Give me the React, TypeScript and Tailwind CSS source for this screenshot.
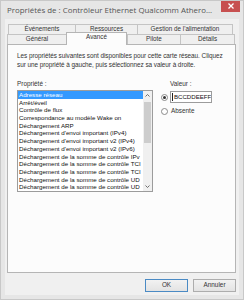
import React from "react";

const items = [
  "Adresse réseau",
  "Arrêt/éveil",
  "Contrôle de flux",
  "Correspondance au modèle Wake on",
  "Déchargement ARP",
  "Déchargement d'envoi important (IPv4)",
  "Déchargement d'envoi important v2 (IPv4)",
  "Déchargement d'envoi important v2 (IPv6)",
  "Déchargement de la somme de contrôle IPv",
  "Déchargement de la somme de contrôle TCI",
  "Déchargement de la somme de contrôle TCI",
  "Déchargement de la somme de contrôle UD",
  "Déchargement de la somme de contrôle UD",
];

function Tab({ label, w, selected }: { label: string; w: string; selected?: boolean }) {
  if (selected) {
    return (
      <div
        className={`${w} relative z-10 -mt-[2px] h-[13px] border-x border-t border-[#b5b5b5] bg-[#fcfcfc] flex items-start justify-center pt-[1px] text-[#333]`}
      >
        {label}
      </div>
    );
  }
  return (
    <div
      className={`${w} h-[10px] border-l border-t border-[#c4c4c4] bg-[#efefef] flex items-center justify-center text-[#333] last:border-r`}
    >
      {label}
    </div>
  );
}

export default function App() {
  return (
    <div
      className="w-[244px] h-[300px] bg-[#e6e6e6] flex flex-col overflow-hidden border border-[#c8c8c8]"
      style={{ fontFamily: '"Liberation Sans", Arial, sans-serif' }}
    >
      {/* Title bar */}
      <div className="h-[18px] flex items-start shrink-0">
        <div
          className="pl-[6px] pt-[4px] text-[7.9px] leading-[10px] text-[#555] whitespace-nowrap flex-1 overflow-hidden"
          style={{ fontFamily: '"Open Sans", "Noto Sans", sans-serif' }}
        >
          Propriétés de : Contrôleur Ethernet Qualcomm Athero...
        </div>
        <div className="w-[19px] h-[12px] bg-[#c75050] flex items-center justify-center mr-[3px] -mt-[1px] shrink-0">
          <svg width="6" height="6" viewBox="0 0 6 6">
            <path d="M0.5 0.5 L5.5 5.5 M5.5 0.5 L0.5 5.5" stroke="#fff" strokeWidth="1.3" />
          </svg>
        </div>
      </div>

      {/* Client area */}
      <div className="flex-1 mx-[4px] mb-[4px] bg-[#f0f0f0] flex flex-col pt-[5px]">
        {/* Tabs */}
        <div className="text-[6.3px] leading-none">
          <div className="flex ml-[3px]">
            <Tab label="Événements" w="w-[67px]" />
            <Tab label="Ressources" w="w-[62px]" />
            <Tab label="Gestion de l'alimentation" w="w-[96px]" />
          </div>
          <div className="flex ml-[2px]">
            <Tab label="Général" w="w-[59px]" />
            <Tab label="Avancé" w="w-[61px]" selected />
            <Tab label="Pilote" w="w-[53px]" />
            <Tab label="Détails" w="w-[55px]" />
          </div>
        </div>

        {/* Panel */}
        <div className="ml-[2px] w-[229px] h-[229px] -mt-[1px] border border-[#b5b5b5] bg-[#fcfcfc] flex flex-col px-[9px] pt-[6px]">
          <p className="text-[6.4px] leading-[9px] text-[#333] tracking-[-0.05px]">
            Les propriétés suivantes sont disponibles pour cette carte réseau. Cliquez sur une propriété à gauche, puis sélectionnez sa valeur à droite.
          </p>

          <div className="flex mt-[11px]">
            {/* Left column */}
            <div className="w-[136px] flex flex-col">
              <div className="text-[6.4px] leading-[8px] text-[#333]">Propriété :</div>
              <div className="mt-[2px] h-[102px] border border-[#9c9c9c] bg-white flex">
                <div className="flex-1 overflow-hidden">
                  {items.map((t, i) => (
                    <div
                      key={i}
                      className={`h-[7.7px] leading-[7.7px] text-[6.2px] whitespace-nowrap pl-[1px] ${
                        i === 0 ? "bg-[#3399ff] text-white" : "text-[#111]"
                      }`}
                    >
                      {t}
                    </div>
                  ))}
                </div>
                {/* Scrollbar */}
                <div className="w-[9px] bg-[#f0f0f0] flex flex-col items-center">
                  <div className="h-[9px] flex items-center justify-center">
                    <svg width="5" height="3" viewBox="0 0 5 3">
                      <path d="M0.5 2.5 L2.5 0.5 L4.5 2.5" stroke="#606060" strokeWidth="0.9" fill="none" />
                    </svg>
                  </div>
                  <div className="w-[7px] h-[41px] bg-[#cdcdcd] mt-[2px]" />
                  <div className="flex-1" />
                  <div className="h-[9px] flex items-center justify-center">
                    <svg width="5" height="3" viewBox="0 0 5 3">
                      <path d="M0.5 0.5 L2.5 2.5 L4.5 0.5" stroke="#606060" strokeWidth="0.9" fill="none" />
                    </svg>
                  </div>
                </div>
              </div>
            </div>

            {/* Right column */}
            <div className="ml-[8px] flex flex-col">
              <div className="ml-[9px] text-[6.4px] leading-[8px] text-[#333]">Valeur :</div>
              <div className="mt-[3px] flex items-center">
                <div className="w-[7px] h-[7px] rounded-full border border-[#8a8a8a] bg-white flex items-center justify-center">
                  <div className="w-[3px] h-[3px] rounded-full bg-[#333]" />
                </div>
                <div className="ml-[2px] w-[42px] h-[12px] border border-[#9c9c9c] bg-white flex items-center pl-[1px] overflow-hidden">
                  <div className="w-[1px] h-[8px] bg-[#222] mr-[1px] shrink-0" />
                  <span className="text-[6.1px] leading-none text-[#111] whitespace-nowrap">BCCDDEEFF</span>
                </div>
              </div>
              <div className="mt-[5px] flex items-center">
                <div className="w-[7px] h-[7px] rounded-full border border-[#8a8a8a] bg-white" />
                <div className="ml-[3px] text-[6.4px] leading-none text-[#333]">Absente</div>
              </div>
            </div>
          </div>
        </div>

        {/* Buttons */}
        <div className="flex justify-end gap-[5px] mt-[6px] mr-[3px]">
          <button className="w-[43px] h-[13px] border border-[#4a8ac4] bg-gradient-to-b from-[#f2f2f2] to-[#e3e3e3] text-[6.4px] leading-none text-[#333]">
            OK
          </button>
          <button className="w-[43px] h-[13px] border border-[#adadad] bg-gradient-to-b from-[#f2f2f2] to-[#e3e3e3] text-[6.4px] leading-none text-[#333]">
            Annuler
          </button>
        </div>
      </div>
    </div>
  );
}
